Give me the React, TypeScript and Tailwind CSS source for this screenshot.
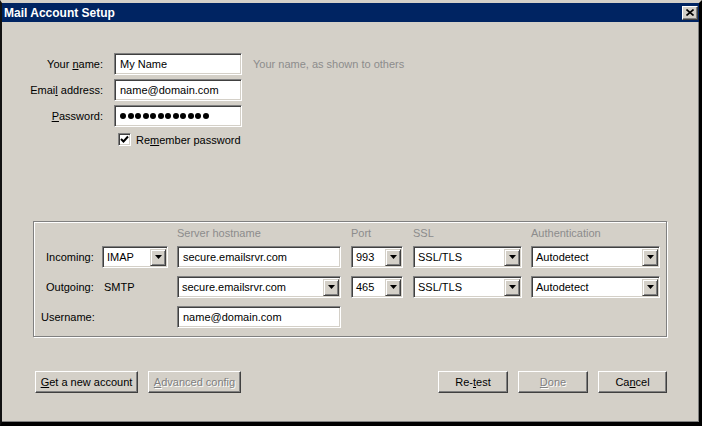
import React from "react";

const sunken =
  "border border-t-[#808080] border-l-[#808080] border-b-white border-r-white bg-white shadow-[inset_1px_1px_0_#404040,inset_-1px_-1px_0_#d4d0c8]";
const raised =
  "border border-t-white border-l-white border-b-[#404040] border-r-[#404040] bg-[#d4d0c8] shadow-[inset_-1px_-1px_0_#808080]";

function Field({ value, className = "" }: { value: string; className?: string }) {
  return <div className={`flex h-[22px] items-center pl-[5px] ${sunken} ${className}`}>{value}</div>;
}

function Select({ value, className = "" }: { value: string; className?: string }) {
  return (
    <div className={`flex h-[22px] items-center justify-between pl-[4px] pr-[1px] ${sunken} ${className}`}>
      <span>{value}</span>
      <span
        className={`flex h-[17px] w-[16px] items-center justify-center border border-t-[#d4d0c8] border-l-[#d4d0c8] border-b-[#404040] border-r-[#404040] bg-[#d4d0c8] shadow-[inset_1px_1px_0_white,inset_-1px_-1px_0_#808080]`}
      >
        <svg width="7" height="4" viewBox="0 0 7 4">
          <path d="M0 0h7L3.5 4z" fill="#000" />
        </svg>
      </span>
    </div>
  );
}

function Button({ children, disabled = false, className = "" }: { children: React.ReactNode; disabled?: boolean; className?: string }) {
  return (
    <button
      type="button"
      className={`flex h-[22px] items-center justify-center ${raised} ${
        disabled ? "text-[#808080] [text-shadow:1px_1px_0_white]" : "text-black"
      } ${className}`}
    >
      {children}
    </button>
  );
}

export default function App() {
  return (
    <div className="h-[426px] w-[702px] overflow-hidden border-t-[3px] border-l-2 border-r-[3px] border-b-4 border-t-[#d4d0c8] border-l-[#111] border-r-black border-b-black bg-[#d4d0c8] font-['Liberation_Sans',Arial,sans-serif] text-[11px] leading-[14px] text-black shadow-[inset_0_-1px_0_#808080,inset_-1px_0_0_#808080]">
      {/* title bar */}
      <div className="flex h-[19px] items-center justify-between bg-[#002462] pl-[2px] pr-[1px]">
        <span className="text-[12px] font-bold text-white">Mail Account Setup</span>
        <span className={`flex h-[14px] w-[16px] items-center justify-center ${raised}`}>
          <svg width="8" height="7" viewBox="0 0 8 7">
            <path d="M0.5 0.5 7.5 6.5M7.5 0.5 0.5 6.5" stroke="#000" strokeWidth="1.6" />
          </svg>
        </span>
      </div>

      {/* account fields */}
      <div className="grid grid-cols-[101px_128px_auto] items-center gap-x-[11px] gap-y-[4px] pt-[31px]">
        <span className="text-right">
          Your <u>n</u>ame:
        </span>
        <Field value="My Name" />
        <span className="text-[#8c8c8c]">Your name, as shown to others</span>

        <span className="text-right">
          Emai<u>l</u> address:
        </span>
        <Field value="name@domain.com" />
        <span />

        <span className="text-right">
          <u>P</u>assword:
        </span>
        <div className={`flex h-[22px] items-center gap-[1.5px] pl-[5px] ${sunken}`}>
          {Array.from({ length: 12 }).map((_, i) => (
            <span key={i} className="h-[6px] w-[6px] rounded-full bg-black" />
          ))}
        </div>
        <span />

        <span />
        <div className="mt-[2px] flex h-[13px] items-center gap-[5px] pl-[4px]">
          <span className={`flex h-[13px] w-[13px] items-center justify-center ${sunken}`}>
            <svg width="9" height="9" viewBox="0 0 9 9">
              <path d="M1 4 3.5 6.5 8 1.5" stroke="#000" strokeWidth="2" fill="none" />
            </svg>
          </span>
          <span className="whitespace-nowrap">
            Re<u>m</u>ember password
          </span>
        </div>
        <span />
      </div>

      {/* server settings */}
      <div className="ml-[31px] mt-[75px] w-[634px] border border-[#808080] pb-[8px] pl-[7px] pt-[4px] shadow-[inset_1px_1px_0_white,1px_1px_0_white]">
        <div className="grid grid-cols-[61px_75px_174px_62px_118px_129px] items-center gap-y-[8px]">
          <span />
          <span />
          <span className="-mb-[2px] h-[14px] text-[#8c8c8c]">Server hostname</span>
          <span className="-mb-[2px] h-[14px] text-[#8c8c8c]">Port</span>
          <span className="-mb-[2px] h-[14px] text-[#8c8c8c]">SSL</span>
          <span className="-mb-[2px] h-[14px] text-[#8c8c8c]">Authentication</span>

          <span className="pl-[5px]">Incoming:</span>
          <Select value="IMAP" className="w-[66px]" />
          <Field value="secure.emailsrvr.com" className="w-[164px]" />
          <Select value="993" className="w-[52px]" />
          <Select value="SSL/TLS" className="w-[109px]" />
          <Select value="Autodetect" className="w-[129px]" />

          <span className="pl-[5px]">Outgoing:</span>
          <span className="pl-[2px]">SMTP</span>
          <Select value="secure.emailsrvr.com" className="w-[164px]" />
          <Select value="465" className="w-[52px]" />
          <Select value="SSL/TLS" className="w-[109px]" />
          <Select value="Autodetect" className="w-[129px]" />

          <span>Username:</span>
          <span />
          <Field value="name@domain.com" className="w-[164px]" />
          <span />
          <span />
          <span />
        </div>
      </div>

      {/* buttons */}
      <div className="mt-[34px] flex items-center pl-[33px] pr-[32px]">
        <Button className="w-[103px]">
          <span>
            <u>G</u>et a new account
          </span>
        </Button>
        <Button disabled className="ml-[10px] w-[93px]">
          <span>
            <u>A</u>dvanced config
          </span>
        </Button>
        <div className="ml-auto flex gap-[10px]">
          <Button className="w-[70px]">
            <span>
              Re-<u>t</u>est
            </span>
          </Button>
          <Button disabled className="w-[70px]">
            <span>
              <u>D</u>one
            </span>
          </Button>
          <Button className="w-[69px]">
            <span>
              Ca<u>n</u>cel
            </span>
          </Button>
        </div>
      </div>
    </div>
  );
}
